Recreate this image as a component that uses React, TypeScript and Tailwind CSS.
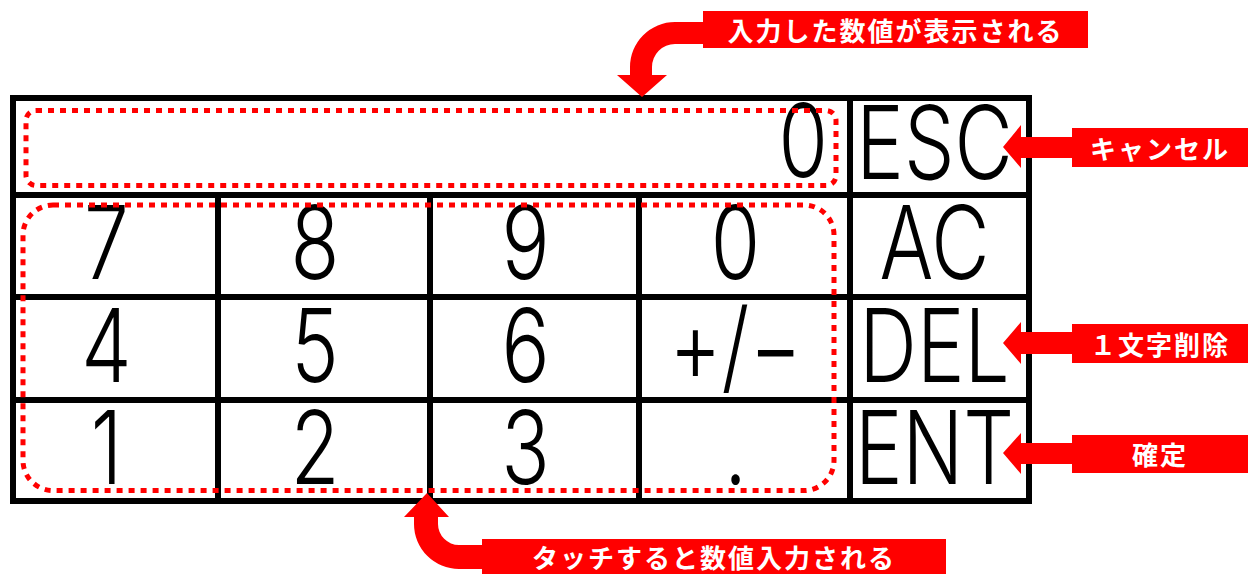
import type { ReactNode } from 'react'

const keyFont = 'font-["Inter","Liberation_Sans",sans-serif] font-light leading-[0.72]'
const labelFont =
  'font-["Noto_Sans_CJK_JP","Noto_Sans",sans-serif] font-bold text-white text-[26px] leading-none tracking-[2px]'

function Key({ children, className = '' }: { children: ReactNode; className?: string }) {
  return (
    <div className={`flex items-center justify-center bg-white ${className}`}>
      <span className={`inline-block scale-y-[1.27] text-[80px] text-black ${keyFont}`}>{children}</span>
    </div>
  )
}

function Label({ children, className = '' }: { children: ReactNode; className?: string }) {
  return (
    <div className={`flex items-center justify-center bg-[#ff0000] ${labelFont} ${className}`}>
      {children}
    </div>
  )
}

export default function App() {
  return (
    <div className="relative h-[575px] w-[1248px] overflow-hidden bg-white">
      {/* 上部ラベル */}
      <div className="pl-[703px] pt-[11px]">
        <Label className="h-[37px] w-[385px]">入力した数値が表示される</Label>
      </div>

      <div className="mt-[47px] flex">
        {/* テンキー本体 */}
        <div className="ml-[10px] grid grid-cols-[199px_206px_203px_205px_173px] grid-rows-[91px_96px_97px_95px] gap-[6px] bg-black p-[6px]">
          <Key className="col-span-4 justify-end pr-[19px] pb-[14px]">0</Key>
          <Key className="pr-[10px] pb-[10px]">ESC</Key>

          <Key className="pr-[18px] pb-[8px]">7</Key>
          <Key className="pr-[18px] pb-[8px]">8</Key>
          <Key className="pr-[18px] pb-[8px]">9</Key>
          <Key className="pr-[18px] pb-[8px]">0</Key>
          <Key className="pr-[10px] pb-[8px]">AC</Key>

          <Key className="pr-[18px] pb-[8px]">4</Key>
          <Key className="pr-[18px] pb-[8px]">5</Key>
          <Key className="pr-[18px] pb-[8px]">6</Key>
          <Key className="pr-[18px] pb-[8px]">+/−</Key>
          <Key className="pr-[10px] pb-[8px]">DEL</Key>

          <Key className="pr-[18px] pb-[8px]">1</Key>
          <Key className="pr-[18px] pb-[8px]">2</Key>
          <Key className="pr-[18px] pb-[8px]">3</Key>
          <Key className="pr-[18px] pb-[8px] font-bold">.</Key>
          <Key className="pr-[10px] pb-[8px]">ENT</Key>
        </div>

        {/* 右側ラベル */}
        <div className="ml-[40px] flex w-[176px] flex-col">
          <Label className="mt-[33px] h-[39px]">キャンセル</Label>
          <Label className="mt-[157px] h-[39px]">１文字削除</Label>
          <Label className="mt-[72px] h-[38px]">確定</Label>
        </div>
      </div>

      {/* 下部ラベル */}
      <div className="pl-[482px] pt-[35px]">
        <Label className="h-[35px] w-[464px]">タッチすると数値入力される</Label>
      </div>

      {/* 矢印と点線枠 */}
      <svg className="pointer-events-none absolute inset-0" width="1248" height="575" viewBox="0 0 1248 575">
        <g fill="none" stroke="#ff0000" strokeWidth="5" strokeDasharray="6 6">
          <rect x="26" y="110.5" width="810" height="75" rx="10" />
          <rect x="23" y="205" width="811" height="285.5" rx="30" />
        </g>
        <g fill="#ff0000">
          <path d="M704 22 L675 22 A45 45 0 0 0 630 67 L630 75 L617 75 L642 97 L667 75 L652 75 L652 67 A23 23 0 0 1 675 44 L704 44 Z" />
          <path d="M1073 137 L1021 137 L1021 125 L1003 147 L1021 168 L1021 158 L1073 158 Z" />
          <path d="M1073 332 L1021 332 L1021 322 L1003 343 L1021 364 L1021 354 L1073 354 Z" />
          <path d="M1073 443 L1021 443 L1021 433 L1003 453 L1021 474 L1021 464 L1073 464 Z" />
          <path d="M483 545 L459 545 A21 21 0 0 1 438 524 L438 517 L449 517 L427 493 L404 517 L414 517 L414 524 A45 45 0 0 0 459 569 L483 569 Z" />
        </g>
      </svg>
    </div>
  )
}
